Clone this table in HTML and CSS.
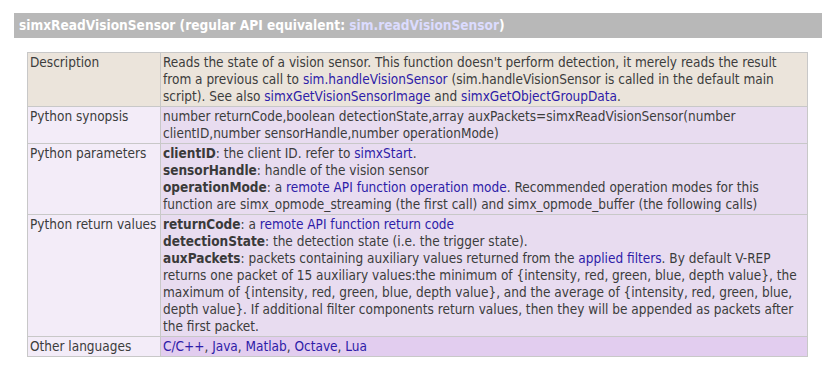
FILE: index.html
```html
<!DOCTYPE html>
<html>
<head>
<meta charset="utf-8">
<link rel="stylesheet" href="styles.css">
</head>
<body>
<div class="page">
  <h3 class="title">simxReadVisionSensor (regular API equivalent: <a href="#" class="title-link">sim.readVisionSensor</a>)</h3>
  <table class="api">
    <tr class="row-desc">
      <td class="label">Description</td>
      <td class="value">Reads the state of a vision sensor. This function doesn't perform detection, it merely reads the result from a previous call to <a href="#">sim.handleVisionSensor</a> (sim.handleVisionSensor is called in the default main script). See also <a href="#">simxGetVisionSensorImage</a> and <a href="#">simxGetObjectGroupData</a>.</td>
    </tr>
    <tr class="row-py">
      <td class="label">Python synopsis</td>
      <td class="value">number returnCode,boolean detectionState,array auxPackets=simxReadVisionSensor(number clientID,number sensorHandle,number operationMode)</td>
    </tr>
    <tr class="row-py">
      <td class="label">Python parameters</td>
      <td class="value"><strong>clientID</strong>: the client ID. refer to <a href="#">simxStart</a>.<br>
<strong>sensorHandle</strong>: handle of the vision sensor<br>
<strong>operationMode</strong>: a <a href="#">remote API function operation mode</a>. Recommended operation modes for this function are simx_opmode_streaming (the first call) and simx_opmode_buffer (the following calls)</td>
    </tr>
    <tr class="row-py">
      <td class="label">Python return values</td>
      <td class="value"><strong>returnCode</strong>: a <a href="#">remote API function return code</a><br>
<strong>detectionState</strong>: the detection state (i.e. the trigger state).<br>
<strong>auxPackets</strong>: packets containing auxiliary values returned from the <a href="#">applied filters</a>. By default V-REP returns one packet of 15 auxiliary values:the minimum of {intensity, red, green, blue, depth value}, the maximum of {intensity, red, green, blue, depth value}, and the average of {intensity, red, green, blue, depth value}. If additional filter components return values, then they will be appended as packets after the first packet.</td>
    </tr>
    <tr class="row-other">
      <td class="label">Other languages</td>
      <td class="value"><a href="#">C/C++</a>, <a href="#">Java</a>, <a href="#">Matlab</a>, <a href="#">Octave</a>, <a href="#">Lua</a></td>
    </tr>
  </table>
</div>
</body>
</html>
```

FILE: styles.css
```css
html, body {
  margin: 0;
  padding: 0;
  background: #ffffff;
}

.page {
  padding: 13px 12px 0 14px;
  font-family: "DejaVu Sans Condensed", "DejaVu Sans", sans-serif;
  font-size: 13.5px;
  color: #3c3c3c;
}

.title {
  margin: 0;
  height: 25px;
  line-height: 25px;
  padding: 0 5px;
  background: #b8b8b8;
  color: #ffffff;
  font-size: 13.6px;
  font-weight: bold;
}

.title-link {
  color: #dcdcff;
  text-decoration: none;
}

.api {
  margin: 14px 0 0 13px;
  width: 781px;
  border-collapse: collapse;
  border: 1px solid #c8c8c8;
}

.api td {
  border: 1px solid #c8c8c8;
  padding: 1px 2px 1px 2px;
  vertical-align: top;
  line-height: 17px;
}

.api .label {
  width: 128px;
  white-space: nowrap;
}

.api a {
  color: #2e1ca8;
  text-decoration: none;
}

.api strong {
  color: #3a3a3a;
}

.row-desc td {
  background: #ebe4db;
}

.row-py .label,
.row-other .label {
  background: #f3ecf8;
}

.row-py .value {
  background: #e8dcf0;
}

.row-other .value {
  background: #e2cdef;
}
```
